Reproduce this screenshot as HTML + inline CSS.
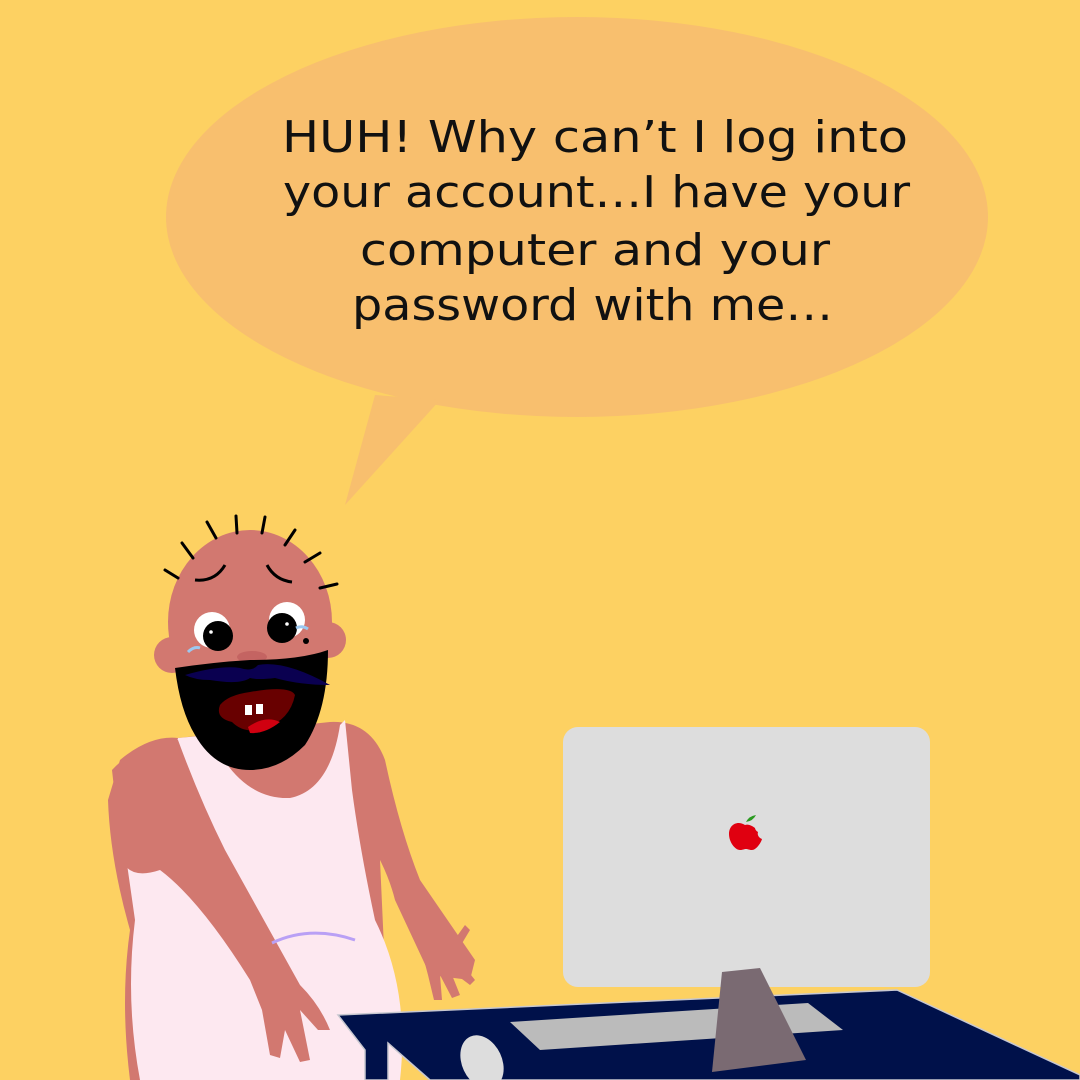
<!DOCTYPE html>
<html><head><meta charset="utf-8"><style>html,body{margin:0;padding:0;background:#FDD162}svg{display:block}</style></head>
<body>
<svg width="1080" height="1080" viewBox="0 0 1080 1080" xmlns="http://www.w3.org/2000/svg">
<rect width="1080" height="1080" fill="#FDD162"/>
<ellipse cx="577" cy="217" rx="411" ry="200" fill="#F8BF6E"/>
<polygon points="375,395 345,505 440,400" fill="#F8BF6E"/>
<g font-family="'DejaVu Sans','Liberation Sans',sans-serif" font-size="44" fill="#111">
<text x="282" y="152" textLength="626" lengthAdjust="spacingAndGlyphs">HUH! Why can’t I log into</text>
<text x="283" y="207" textLength="627" lengthAdjust="spacingAndGlyphs">your account…I have your</text>
<text x="360" y="265" textLength="470" lengthAdjust="spacingAndGlyphs">computer and your</text>
<text x="352" y="320" textLength="481" lengthAdjust="spacingAndGlyphs">password with me…</text>
</g>
<path d="M120,760 Q150,735 178,738 L330,722 Q370,720 385,760 Q400,830 420,880 L475,960 L470,980 L430,975 L395,900 Q390,880 380,860 L390,1080 L130,1080 Q120,1000 130,930 Q110,860 108,800 Z" fill="#D27870"/>
<path d="M178,738 L210,735 Q240,800 290,798 Q330,790 340,725 L345,720 L352,790 Q360,850 375,920 Q410,990 400,1080 L140,1080 Q125,1000 135,920 L125,850 L122,850 Q140,850 150,848 Z" fill="#FDE8F0"/>
<path d="M112,770 Q140,740 178,740 Q200,800 225,850 L300,985 Q320,1005 330,1030 L318,1030 L300,1010 L310,1060 L300,1062 L285,1030 L280,1058 L270,1055 L262,1010 L250,980 Q200,900 160,870 Q130,880 122,860 Z" fill="#D27870"/>
<path d="M420,945 L440,960 L465,925 L470,930 L455,955 L475,980 L470,985 L450,970 L460,995 L452,998 L440,975 L442,1000 L434,1000 L428,975 Z" fill="#D27870"/>
<path d="M272,943 Q310,925 355,940" stroke="#B9A0F5" stroke-width="3" fill="none"/>
<circle cx="172" cy="655" r="18" fill="#D27870"/>
<circle cx="328" cy="640" r="18" fill="#D27870"/>
<ellipse cx="250" cy="622" rx="82" ry="92" fill="#D27870"/>
<g stroke="#000" stroke-width="3" stroke-linecap="round">
<line x1="178" y1="578" x2="165" y2="570"/><line x1="193" y1="558" x2="182" y2="543"/>
<line x1="216" y1="538" x2="207" y2="522"/><line x1="237" y1="533" x2="236" y2="516"/>
<line x1="262" y1="533" x2="265" y2="517"/><line x1="285" y1="545" x2="295" y2="530"/>
<line x1="305" y1="562" x2="320" y2="553"/><line x1="320" y1="588" x2="337" y2="584"/>
</g>
<path d="M195,580 Q215,582 225,565" stroke="#000" stroke-width="3" fill="none"/>
<path d="M267,565 Q275,580 292,582" stroke="#000" stroke-width="3" fill="none"/>
<circle cx="212" cy="630" r="18" fill="#fff"/><circle cx="218" cy="636" r="15" fill="#000"/><circle cx="211" cy="632" r="1.8" fill="#fff"/>
<circle cx="287" cy="620" r="18" fill="#fff"/><circle cx="282" cy="628" r="15" fill="#000"/><circle cx="287" cy="624" r="1.8" fill="#fff"/>
<path d="M188,652 Q194,646 200,648" stroke="#9CC8F0" stroke-width="3" fill="none"/>
<path d="M296,628 Q302,625 308,629" stroke="#9CC8F0" stroke-width="3" fill="none"/>
<circle cx="306" cy="641" r="3" fill="#000"/>
<ellipse cx="252" cy="657" rx="15" ry="6" fill="#C46462"/>
<path d="M175,668 Q215,662 250,660 Q300,660 328,650 Q328,710 305,745 Q280,770 250,770 Q215,770 195,735 Q180,710 175,668 Z" fill="#000"/>
<path d="M185,675 Q220,665 240,668 Q252,672 258,665 Q285,660 330,685 Q300,685 275,678 Q258,680 250,678 Q240,685 210,680 Q195,680 185,675 Z" fill="#0A0050"/>
<path d="M220,705 Q228,695 250,692 Q290,685 295,695 Q290,720 265,728 Q245,735 232,722 Q215,718 220,705 Z" fill="#680000"/>
<path d="M248,727 Q265,715 280,722 Q265,734 250,733 Z" fill="#D00010"/>
<rect x="245" y="705" width="7" height="10" fill="#fff"/><rect x="256" y="704" width="7" height="10" fill="#fff"/>
<rect x="563" y="727" width="367" height="260" rx="15" fill="#DDDDDD"/>
<path d="M745,825 c-8,-5 -16,0 -16,9 c0,8 6,16 11,16 c3,0 4,-1 6,-1 c2,0 3,1 6,1 c4,0 9,-7 10,-11 c-3,-1 -5,-4 -4,-7 c-2,-1 -3,-3 -3,-4 c-4,-3 -7,-4 -10,-3 Z" fill="#E00010"/>
<path d="M746,822 q3,-6 10,-7 q-3,6 -10,7 Z" fill="#2A9A20"/>
<polygon points="338,1015 897,990 1080,1075 1080,1080 430,1080 388,1043 388,1080 365,1080 365,1050" fill="#00114A" stroke="#C8C8D0" stroke-width="1.5"/>
<polygon points="510,1022 808,1003 843,1030 540,1050" fill="#BBBBBB"/>
<ellipse cx="482" cy="1062" rx="20" ry="28" transform="rotate(-25 482 1062)" fill="#DDDDDD"/>
<path d="M722,972 L760,968 L806,1060 L712,1072 Z" fill="#7A6A72"/>
</svg>
</body></html>
